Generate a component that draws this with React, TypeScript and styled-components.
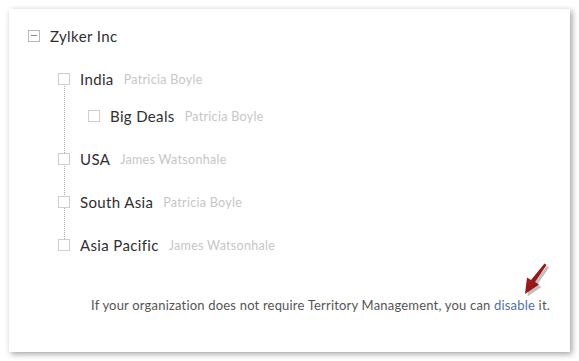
import React from 'react';
import styled, { createGlobalStyle } from 'styled-components';

const GlobalStyle = createGlobalStyle`
  html, body {
    margin: 0;
    padding: 0;
    background: #ffffff;
  }
  body {
    font-family: Lato, "Open Sans", Arial, sans-serif;
  }
`;

const Page = styled.div`
  width: 579px;
  height: 361px;
  padding: 9px 0 0 9px;
  box-sizing: border-box;
`;

const Card = styled.div`
  width: 561px;
  height: 343px;
  box-sizing: border-box;
  padding: 15px 20px 0 19px;
  background: #fff;
  box-shadow: 2px 2px 6px rgba(0, 0, 0, 0.38);
  display: flex;
  flex-direction: column;
`;

const Row = styled.div`
  display: flex;
  align-items: center;
  height: 24px;
`;

const Box = styled.span<{ $root?: boolean }>`
  width: 12px;
  height: 12px;
  box-sizing: border-box;
  border: 1px solid ${(p) => (p.$root ? '#b9b9b9' : '#cfcfcf')};
  background: #fff;
  position: relative;
  flex: none;
  margin-right: 10px;

  ${(p) =>
    p.$root &&
    `
    &::after {
      content: '';
      position: absolute;
      left: 2px;
      right: 2px;
      top: 4px;
      height: 1px;
      background: #8a8a8a;
    }
  `}
`;

const Label = styled.span<{ $root?: boolean }>`
  font-size: 15px;
  letter-spacing: ${(p) => (p.$root ? '0.4px' : '0.35px')};
  color: #2f2f2f;
  margin-right: 10px;
`;

const Owner = styled.span`
  font-size: 12.5px;
  letter-spacing: 0.3px;
  color: #c6c6c6;
`;

const Children = styled.div`
  position: relative;
  margin-left: 30px;
  margin-top: 19px;
  display: flex;
  flex-direction: column;
  gap: 19px;

  &::before {
    content: '';
    position: absolute;
    left: 6px;
    top: 19px;
    bottom: 18px;
    border-left: 1px dotted #a8a8a8;
  }
`;

const Nested = styled.div`
  margin-left: 30px;
  margin-top: 13px;
`;

const Footer = styled.div`
  position: relative;
  margin-top: 40px;
  text-align: right;
  font-size: 13px;
  letter-spacing: 0.19px;
  line-height: 16px;
  color: #555;
`;

const Link = styled.a`
  color: #4f6fb0;
  text-decoration: none;
`;

const Arrow = styled.svg`
  position: absolute;
  right: -3px;
  top: -35px;
`;

type Node = { name: string; owner: string; kids?: Node[] };

const territories: Node[] = [
  { name: 'India', owner: 'Patricia Boyle', kids: [{ name: 'Big Deals', owner: 'Patricia Boyle' }] },
  { name: 'USA', owner: 'James Watsonhale' },
  { name: 'South Asia', owner: 'Patricia Boyle' },
  { name: 'Asia Pacific', owner: 'James Watsonhale' },
];

const App = () => {
  return (
    <Page>
      <GlobalStyle />
      <Card>
        <Row>
          <Box $root />
          <Label $root>Zylker Inc</Label>
        </Row>
        <Children>
          {territories.map((t) => (
            <div key={t.name}>
              <Row>
                <Box />
                <Label>{t.name}</Label>
                <Owner>{t.owner}</Owner>
              </Row>
              {t.kids && (
                <Nested>
                  {t.kids.map((k) => (
                    <Row key={k.name}>
                      <Box />
                      <Label>{k.name}</Label>
                      <Owner>{k.owner}</Owner>
                    </Row>
                  ))}
                </Nested>
              )}
            </div>
          ))}
        </Children>
        <Footer>
          If your organization does not require Territory Management, you can <Link href="#">disable</Link> it.
          <Arrow width="32" height="40" viewBox="0 0 32 40">
            <defs>
              <linearGradient id="ar" x1="0" y1="0" x2="1" y2="1">
                <stop offset="0" stopColor="#b32020" />
                <stop offset="1" stopColor="#7a0e0e" />
              </linearGradient>
            </defs>
            <g transform="translate(2.5,2.5)" fill="#000" opacity="0.25">
              <path d="M23.5 1.5 L25.5 3 L14 20 L18 22.5 L4 32 L6 15.5 L10 18 Z" />
            </g>
            <path d="M23.5 1.5 L25.5 3 L14 20 L18 22.5 L4 32 L6 15.5 L10 18 Z" fill="url(#ar)" />
          </Arrow>
        </Footer>
      </Card>
    </Page>
  );
};

export default App;
